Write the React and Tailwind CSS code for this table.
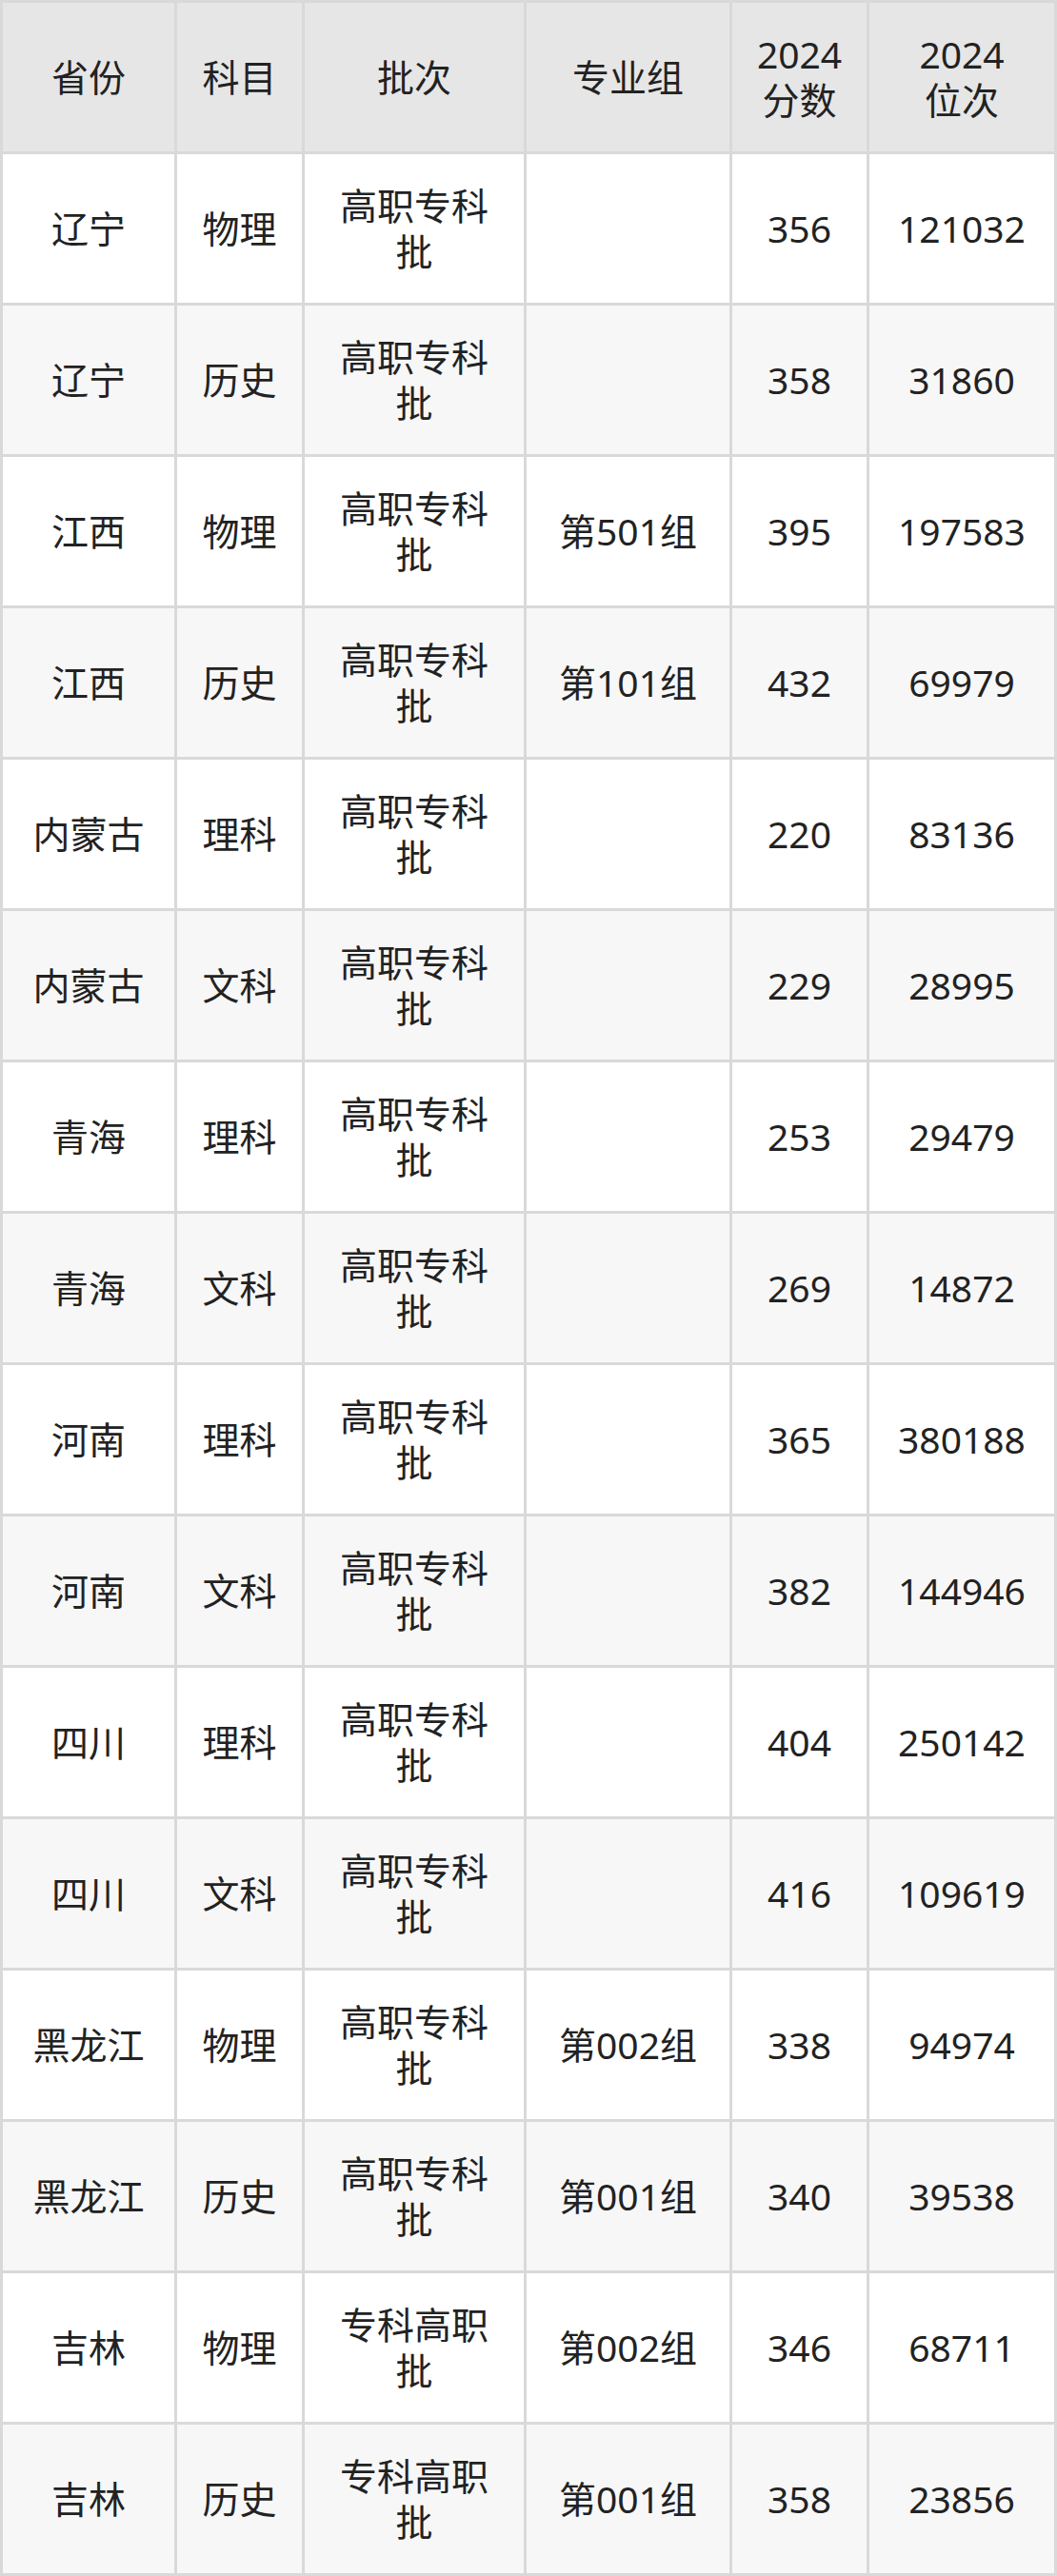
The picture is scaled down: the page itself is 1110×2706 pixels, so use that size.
const header = ['省份', '科目', '批次', '专业组', ['2024', '分数'], ['2024', '位次']]

const rows = [
  ['辽宁', '物理', '高职专科批', '', '356', '121032'],
  ['辽宁', '历史', '高职专科批', '', '358', '31860'],
  ['江西', '物理', '高职专科批', '第501组', '395', '197583'],
  ['江西', '历史', '高职专科批', '第101组', '432', '69979'],
  ['内蒙古', '理科', '高职专科批', '', '220', '83136'],
  ['内蒙古', '文科', '高职专科批', '', '229', '28995'],
  ['青海', '理科', '高职专科批', '', '253', '29479'],
  ['青海', '文科', '高职专科批', '', '269', '14872'],
  ['河南', '理科', '高职专科批', '', '365', '380188'],
  ['河南', '文科', '高职专科批', '', '382', '144946'],
  ['四川', '理科', '高职专科批', '', '404', '250142'],
  ['四川', '文科', '高职专科批', '', '416', '109619'],
  ['黑龙江', '物理', '高职专科批', '第002组', '338', '94974'],
  ['黑龙江', '历史', '高职专科批', '第001组', '340', '39538'],
  ['吉林', '物理', '专科高职批', '第002组', '346', '68711'],
  ['吉林', '历史', '专科高职批', '第001组', '358', '23856'],
]

function Cell({ children, bg }) {
  return (
    <div className={`flex h-[156px] items-center justify-center px-[20px] text-center ${bg}`}>
      <span className="break-all">{children}</span>
    </div>
  )
}

export default function App() {
  return (
    <div
      className="grid w-[1110px] grid-cols-[180px_131px_230px_213px_141px_194px] gap-[3px] bg-[#d9d9d9] p-[3px] text-[39px] leading-[48px] text-[#222222]"
      style={{ fontFamily: '"Noto Sans", "Noto Sans CJK SC", sans-serif' }}
    >
      {header.map((h, i) => (
        <Cell key={`h${i}`} bg="bg-[#e6e6e6]">
          {Array.isArray(h) ? (
            <>
              {h[0]}
              <br />
              {h[1]}
            </>
          ) : (
            h
          )}
        </Cell>
      ))}
      {rows.map((row, r) =>
        row.map((v, c) => (
          <Cell key={`${r}-${c}`} bg={r % 2 === 0 ? 'bg-white' : 'bg-[#f7f7f7]'}>
            {v}
          </Cell>
        ))
      )}
    </div>
  )
}
